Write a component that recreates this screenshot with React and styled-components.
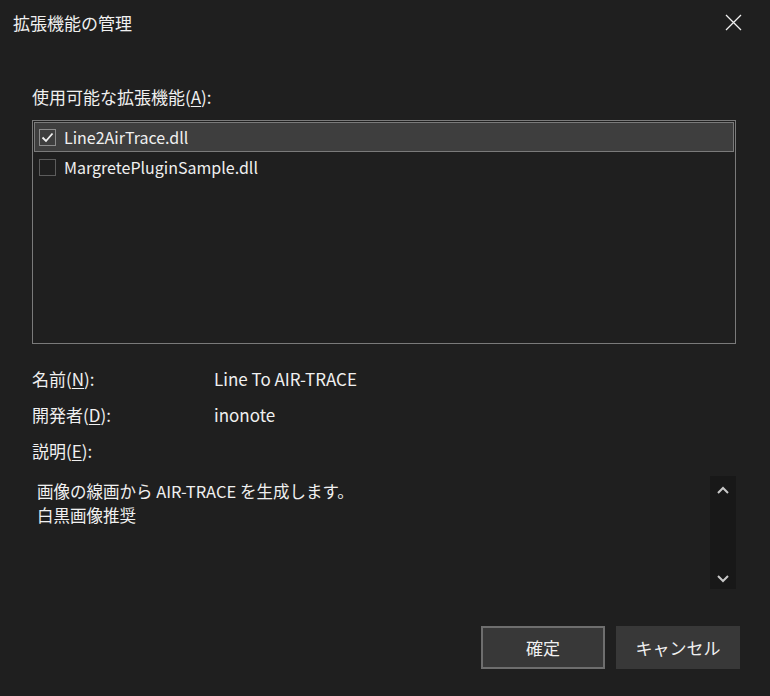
import React from 'react';
import styled, { createGlobalStyle } from 'styled-components';

const GlobalStyle = createGlobalStyle`
  html, body {
    margin: 0;
    padding: 0;
    background: #1f1f1f;
  }

  body {
    font-family: "Noto Sans CJK JP", "Noto Sans", sans-serif;
    color: #f0f0f0;
  }
`;

const Window = styled.div`
  width: 770px;
  height: 696px;
  background: #1f1f1f;
  display: flex;
  flex-direction: column;
  box-sizing: border-box;
`;

const TitleBar = styled.div`
  height: 44px;
  display: flex;
  align-items: center;
  justify-content: space-between;
  padding-left: 13px;
  padding-right: 28px;
  font-size: 17px;
`;

const CloseButton = styled.div`
  width: 18px;
  height: 18px;
  display: flex;
  align-items: center;
  justify-content: center;
`;

const Body = styled.div`
  flex: 1;
  display: flex;
  flex-direction: column;
  padding: 41px 34px 0 32px;
`;

const FieldLabel = styled.div`
  font-size: 17px;
  line-height: 24px;
  margin-bottom: ${(p) => p.$gap || 0}px;
`;

const ListBox = styled.div`
  height: 224px;
  box-sizing: border-box;
  border: 1px solid #7a7a7a;
  padding: 1px;
  display: flex;
  flex-direction: column;
`;

const ListItem = styled.div`
  height: 30px;
  box-sizing: border-box;
  display: flex;
  align-items: center;
  gap: 8px;
  padding-left: 4px;
  font-size: 16px;
  background: ${(p) => (p.$selected ? '#3e3e3e' : 'transparent')};
  border: 1px solid ${(p) => (p.$selected ? '#7a7a7a' : 'transparent')};
`;

const Check = styled.div`
  width: 17px;
  height: 17px;
  box-sizing: border-box;
  border: 1px solid ${(p) => (p.$checked ? '#8c8c8c' : '#5c5c5c')};
  display: flex;
  align-items: center;
  justify-content: center;
`;

const InfoRow = styled.div`
  display: flex;
  align-items: center;
  font-size: 17px;
  height: 36px;
`;

const InfoKey = styled.div`
  width: 182px;
`;

const Description = styled.div`
  margin-top: 8px;
  height: 113px;
  display: flex;
  justify-content: space-between;
`;

const DescText = styled.div`
  padding: 3px 0 0 5px;
  font-size: 16.5px;
  line-height: 24px;
`;

const ScrollBar = styled.div`
  width: 26px;
  background: #181818;
  display: flex;
  flex-direction: column;
  justify-content: space-between;
  align-items: center;
  padding: 10px 0 6px;
  box-sizing: border-box;
`;

const Footer = styled.div`
  display: flex;
  justify-content: flex-end;
  gap: 11px;
  margin-top: 37px;
  margin-right: -4px;
`;

const Button = styled.button`
  width: 124px;
  height: 43px;
  box-sizing: border-box;
  background: #383838;
  color: #f0f0f0;
  font-family: inherit;
  font-size: 17px;
  border: 2px solid ${(p) => (p.$default ? '#6e6e6e' : '#383838')};
  padding: 0;
`;

const Key = styled.span`
  text-decoration: underline;
  text-underline-offset: 2px;
`;

const Spacer = styled.div`
  height: ${(p) => p.$h}px;
`;

export default function App() {
  return (
    <>
      <GlobalStyle />
      <Window>
        <TitleBar>
          <span>拡張機能の管理</span>
          <CloseButton>
            <svg width="17" height="17" viewBox="0 0 17 17">
              <path d="M1 1 L16 16 M16 1 L1 16" stroke="#f0f0f0" strokeWidth="1.3" fill="none" />
            </svg>
          </CloseButton>
        </TitleBar>
        <Body>
          <FieldLabel $gap={11}>
            使用可能な拡張機能(<Key>A</Key>):
          </FieldLabel>
          <ListBox>
            <ListItem $selected>
              <Check $checked>
                <svg width="13" height="11" viewBox="0 0 13 11">
                  <path d="M1.5 5.5 L5 9 L11.5 1.5" stroke="#f0f0f0" strokeWidth="1.8" fill="none" />
                </svg>
              </Check>
              Line2AirTrace.dll
            </ListItem>
            <ListItem>
              <Check />
              MargretePluginSample.dll
            </ListItem>
          </ListBox>
          <Spacer $h={16} />
          <InfoRow>
            <InfoKey>
              名前(<Key>N</Key>):
            </InfoKey>
            Line To AIR-TRACE
          </InfoRow>
          <InfoRow>
            <InfoKey>
              開発者(<Key>D</Key>):
            </InfoKey>
            inonote
          </InfoRow>
          <InfoRow>
            <InfoKey>
              説明(<Key>E</Key>):
            </InfoKey>
          </InfoRow>
          <Description>
            <DescText>
              画像の線画から AIR-TRACE を生成します。
              <br />
              白黒画像推奨
            </DescText>
            <ScrollBar>
              <svg width="12" height="8" viewBox="0 0 12 8">
                <path d="M1 7 L6 2 L11 7" stroke="#c8c8c8" strokeWidth="2" fill="none" />
              </svg>
              <svg width="12" height="8" viewBox="0 0 12 8">
                <path d="M1 1 L6 6 L11 1" stroke="#c8c8c8" strokeWidth="2" fill="none" />
              </svg>
            </ScrollBar>
          </Description>
          <Footer>
            <Button $default>確定</Button>
            <Button>キャンセル</Button>
          </Footer>
        </Body>
      </Window>
    </>
  );
}
